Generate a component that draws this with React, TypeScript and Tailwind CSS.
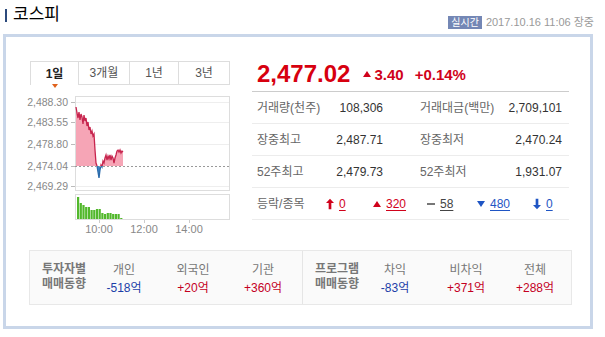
import React from "react";

const FONT = { fontFamily: '"Liberation Sans", "Noto Sans CJK KR", sans-serif' };

const pts: [number, number][] = [
  [76, 107], [77, 113], [78, 118], [79, 112], [80, 120], [81, 114], [82, 117], [83, 124], [84, 115], [85, 121],
  [86, 118], [87, 126], [88, 122], [89, 130], [90, 127], [91, 134], [92, 131], [93, 136], [94, 134], [95, 150],
  [96, 163], [97, 166], [98, 172], [99, 178], [100, 170], [101, 165], [102, 167], [103, 161], [104, 163], [105, 158],
  [106, 155], [107, 160], [108, 156], [109, 159], [110, 155], [111, 160], [112, 156], [113, 158], [114, 163], [115, 158],
  [116, 155], [117, 151], [118, 150], [119, 152], [120, 150], [121, 153], [122, 151], [123, 152],
];

const vols = [197, 203, 205, 207, 207, 210, 210, 209, 209, 213, 214, 213, 213, 214, 214, 214, 218];

function Chart() {
  const line = pts.map((p) => p.join(",")).join(" ");
  const area = `76,166 ${line} 123,166`;
  const base = 166;
  const labels: [string, number][] = [
    ["2,488.30", 102],
    ["2,483.55", 122],
    ["2,478.80", 144],
    ["2,474.04", 166],
    ["2,469.29", 186],
  ];
  return (
    <svg width="210" height="150" viewBox="22 88 210 150" className="block">
      <defs>
        <clipPath id="up">
          <rect x="70" y="90" width="170" height={base - 90} />
        </clipPath>
        <clipPath id="dn">
          <rect x="70" y={base} width="170" height="40" />
        </clipPath>
      </defs>
      {labels.map(([t, y]) => (
        <g key={t}>
          {y !== base && <line x1="75" x2="229" y1={y + 0.5} y2={y + 0.5} stroke="#eeeeee" />}
          <line x1="71" x2="75" y1={y + 0.5} y2={y + 0.5} stroke="#bbbbbb" />
          <text x="68" y={y + 4} fontSize="10.5" fill="#888888" textAnchor="end" style={FONT}>
            {t}
          </text>
        </g>
      ))}
      <rect x="75.5" y="96.5" width="154" height="94" fill="none" stroke="#dddddd" />
      <g clipPath="url(#up)">
        <polygon points={area} fill="#f6a5b6" />
        <polyline points={line} fill="none" stroke="#c7254e" strokeWidth="1.3" />
      </g>
      <g clipPath="url(#dn)">
        <polygon points={area} fill="#3d86c6" />
        <polyline points={line} fill="none" stroke="#2a6aaa" strokeWidth="1.3" />
      </g>
      <line x1="75" x2="231" y1={base + 0.5} y2={base + 0.5} stroke="#999999" strokeDasharray="2,2" />
      <rect x="75.5" y="194.5" width="154" height="25" fill="none" stroke="#dddddd" />
      {vols.map((top, i) => (
        <rect key={i} x={77 + i * 2.7} y={top} width="2.2" height={219 - top} fill="#52b82c" />
      ))}
      {[
        ["10:00", 99],
        ["12:00", 144],
        ["14:00", 189],
      ].map(([t, x]) => (
        <g key={t as string}>
          <line x1={(x as number) + 0.5} x2={(x as number) + 0.5} y1="220" y2="223" stroke="#cccccc" />
          <text x={x as number} y="233" fontSize="11" fill="#888888" textAnchor="middle" style={FONT}>
            {t}
          </text>
        </g>
      ))}
    </svg>
  );
}

function UpArrow({ color }: { color: string }) {
  return (
    <svg width="9" height="12" viewBox="0 0 9 12">
      <polygon points="4.5,0 9,5 6,5 6,12 3,12 3,5 0,5" fill={color} />
    </svg>
  );
}
function DownArrow({ color }: { color: string }) {
  return (
    <svg width="9" height="12" viewBox="0 0 9 12">
      <polygon points="4.5,12 9,7 6,7 6,0 3,0 3,7 0,7" fill={color} />
    </svg>
  );
}
function TriUp({ color, size = 8 }: { color: string; size?: number }) {
  return (
    <svg width={size} height={size * 0.75} viewBox="0 0 8 6">
      <polygon points="4,0 8,6 0,6" fill={color} />
    </svg>
  );
}
function TriDown({ color }: { color: string }) {
  return (
    <svg width="8" height="6" viewBox="0 0 8 6">
      <polygon points="0,0 8,0 4,6" fill={color} />
    </svg>
  );
}

const RED = "#d0021b";
const BLUE = "#1f55c4";

function Row({ l1, v1, l2, v2 }: { l1: string; v1: string; l2: string; v2: string }) {
  return (
    <div className="flex h-[32px] items-center border-b border-[#ececec] pl-[5px] text-[12px]">
      <div className="w-[70px] text-[#666]">{l1}</div>
      <div className="w-[56px] text-right text-[#333]">{v1}</div>
      <div className="w-[37px]" />
      <div className="w-[80px] text-[#666]">{l2}</div>
      <div className="w-[62px] text-right text-[#333]">{v2}</div>
    </div>
  );
}

function Stat({ icon, value, color, w }: { icon: React.ReactNode; value: string; color: string; w: string }) {
  return (
    <div className={`flex items-center gap-[5px] ${w}`}>
      <span className="flex w-[8px] items-center justify-center">{icon}</span>
      <span className="underline underline-offset-2" style={{ color }}>
        {value}
      </span>
    </div>
  );
}

function Investor({ title, value, color, w }: { title: string; value: string; color: string; w: string }) {
  return (
    <div className={`flex flex-col items-center ${w}`}>
      <div className="h-[16px] leading-[16px] text-[#777]">{title}</div>
      <div className="mt-[2px] h-[16px] leading-[16px]" style={{ color }}>
        {value}
      </div>
    </div>
  );
}

export default function App() {
  return (
    <div className="relative h-[337px] w-[605px] overflow-hidden bg-white" style={FONT}>
      {/* header */}
      <div className="flex h-[34px] items-start justify-between">
        <div className="flex items-center pl-[5px] pt-[6px]">
          <span className="h-[13px] w-[2px] bg-[#2c4a7c]" />
          <span className="ml-[6px] text-[17px] leading-[18px] text-black">코스피</span>
        </div>
        <div className="flex items-center pr-[11px] pt-[16px]">
          <span className="flex h-[13px] items-center bg-[#7487b5] px-[3px] text-[10px] leading-[13px] text-white">
            실시간
          </span>
          <span className="ml-[4px] text-[11px] leading-[13px] text-[#999]">2017.10.16 11:06 장중</span>
        </div>
      </div>

      {/* main box */}
      <div className="ml-[3px] h-[295px] w-[590px] border-[3px] border-[#c9d6e9] bg-white">
        <div className="flex pl-[24px] pt-[24px]">
          {/* left chart column */}
          <div className="w-[200px] shrink-0">
            <div className="flex h-[24px] text-[12px]">
              <div className="relative flex w-[49px] items-center justify-center border-l border-r border-t border-[#dddddd] bg-white font-bold text-[#222]">
                1일
                <span className="absolute bottom-[-3px] left-[21px] h-0 w-0 border-l-[3px] border-r-[3px] border-t-[4px] border-l-transparent border-r-transparent border-t-[#e0621c]" />
              </div>
              <div className="flex w-[51px] items-center justify-center border-b border-r border-t border-[#dddddd] text-[#555]">
                3개월
              </div>
              <div className="flex w-[49px] items-center justify-center border-b border-r border-t border-[#dddddd] text-[#555]">
                1년
              </div>
              <div className="flex w-[51px] items-center justify-center border-b border-r border-t border-[#dddddd] text-[#555]">
                3년
              </div>
            </div>
            <div className="ml-[-8px] mt-[3px] w-[210px]">
              <Chart />
            </div>
          </div>

          {/* right info column */}
          <div className="ml-[22px] mt-[-1px] w-[317px] shrink-0">
            <div className="flex h-[32px] items-start border-b border-[#cccccc] pl-[5px]">
              <span className="text-[24px] font-bold leading-[28px]" style={{ color: "#d7000f" }}>
                2,477.02
              </span>
              <span className="ml-[13px] mt-[11px] flex items-center">
                <TriUp color={RED} />
              </span>
              <span className="ml-[3px] mt-[5px] text-[15px] font-bold leading-[20px]" style={{ color: RED }}>
                3.40
              </span>
              <span className="ml-[11px] mt-[5px] text-[15px] font-bold leading-[20px]" style={{ color: RED }}>
                +0.14%
              </span>
            </div>
            <Row l1="거래량(천주)" v1="108,306" l2="거래대금(백만)" v2="2,709,101" />
            <Row l1="장중최고" v1="2,487.71" l2="장중최저" v2="2,470.24" />
            <Row l1="52주최고" v1="2,479.73" l2="52주최저" v2="1,931.07" />
            <div className="flex h-[32px] items-center border-b border-[#ececec] pl-[5px] text-[12px]">
              <div className="w-[69px] text-[#666]">등락/종목</div>
              <Stat icon={<UpArrow color={RED} />} value="0" color={RED} w="w-[47px]" />
              <Stat icon={<TriUp color={RED} />} value="320" color={RED} w="w-[54px]" />
              <Stat
                icon={<span className="block h-[2px] w-[8px] bg-[#777]" />}
                value="58"
                color="#444"
                w="w-[50px]"
              />
              <Stat icon={<TriDown color={BLUE} />} value="480" color={BLUE} w="w-[56px]" />
              <Stat icon={<DownArrow color={BLUE} />} value="0" color={BLUE} w="w-[30px]" />
            </div>
          </div>
        </div>

        {/* investor trends */}
        <div className="ml-[23px] mt-[12px] flex h-[55px] w-[543px] border border-[#e8e8e8] bg-[#fafafa] text-[12px]">
          <div className="flex w-[273px] border-r border-[#e5e5e5] pl-[12px] pt-[11px]">
            <div className="w-[52px] font-bold leading-[15px] text-[#777]">
              투자자별
              <br />
              매매동향
            </div>
            <Investor title="개인" value="-518억" color="#1c3ea8" w="w-[60px]" />
            <Investor title="외국인" value="+20억" color="#c4001f" w="w-[78px]" />
            <Investor title="기관" value="+360억" color="#c4001f" w="w-[62px]" />
          </div>
          <div className="flex pl-[12px] pt-[11px]">
            <div className="w-[52px] font-bold leading-[15px] text-[#777]">
              프로그램
              <br />
              매매동향
            </div>
            <Investor title="차익" value="-83억" color="#1c3ea8" w="w-[56px]" />
            <Investor title="비차익" value="+371억" color="#c4001f" w="w-[86px]" />
            <Investor title="전체" value="+288억" color="#c4001f" w="w-[52px]" />
          </div>
        </div>
      </div>
    </div>
  );
}
